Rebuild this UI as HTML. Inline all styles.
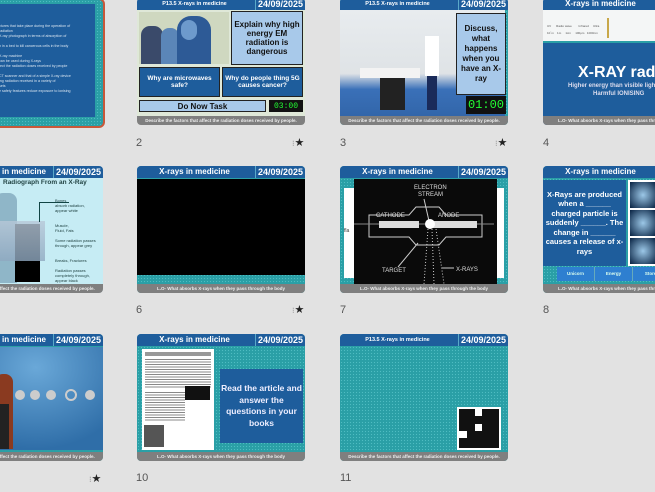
<!DOCTYPE html>
<html><head><meta charset="utf-8"><style>
*{margin:0;padding:0;box-sizing:border-box}
html,body{width:655px;height:492px;overflow:hidden}
body{background:#e2e2e2;font-family:"Liberation Sans",sans-serif}
#w{position:relative;width:655px;height:492px;overflow:hidden}
.s{position:absolute;width:168px;height:127px;border-radius:4px;overflow:hidden;background:#2a9fa6;background-image:radial-gradient(#4fbcc2 0.6px,transparent 0.8px);background-size:3px 3px}
.h{position:absolute;left:0;top:0;width:100%;height:12px;background:#1e5d9c;color:#fff;font-weight:bold;font-size:8px;line-height:12px}
.h .t{position:absolute;left:0;width:115px;text-align:center}
.h .d{position:absolute;right:0;width:50px;text-align:center;border-left:1.5px solid #5aa9c9;font-size:9px}
.f{position:absolute;left:0;bottom:0;width:100%;height:9px;background:#7f7f7f;color:#eee;font-size:4.5px;line-height:9px;text-align:center;font-weight:bold;white-space:nowrap}
.n{position:absolute;font-size:11px;color:#555}
.st{position:absolute;font-size:11px;color:#222}
.b{position:absolute;display:flex;align-items:center;justify-content:center;text-align:center;font-weight:bold}
</style></head><body><div id="w">

<!-- slide 1 -->
<div class="s" style="left:-65px;top:-2px;width:170px;height:130px;border:2.5px solid #c8583a;border-radius:6px">
 <div style="position:absolute;left:0;top:4px;width:158px;height:113px;background:#1e5d9c;color:#d8e4f0;font-size:3.6px;line-height:5px;padding:20px 0 0 62px">
 ctures that take place during the operation of<br>radiation<br>X-ray photograph in terms of absorption of<br><br>n in a bed to kill cancerous cells in the body<br><br>X-ray machine<br>can be used during X-rays<br>fect the radiation doses received by people<br><br>CT scanner and that of a simple X-ray device<br>ing radiation received in a variety of<br>sets<br>e safety features reduce exposure to ionising</div>
</div>

<!-- slide 2 -->
<div class="s" style="left:137px;top:-2px;background:#dfe8d8">
 <div class="h"><span class="t" style="font-size:5.5px">P13.5 X-rays in medicine</span><span class="d">24/09/2025</span></div>
 <div style="position:absolute;left:2px;top:14px;width:90px;height:52px;background:#cfd8c0"></div>
 <div style="position:absolute;left:4px;top:28px;width:22px;height:38px;background:#3a4a6a;border-radius:9px 9px 0 0"></div>
 <div style="position:absolute;left:24px;top:30px;width:18px;height:36px;background:#5b86b8;border-radius:8px 8px 0 0"></div>
 <div style="position:absolute;left:40px;top:18px;width:34px;height:48px;background:#2d5a96;border-radius:14px 14px 0 0"></div>
 <div style="position:absolute;left:44px;top:22px;width:16px;height:20px;background:#6d9acc;border-radius:8px"></div>
 <div class="b" style="left:94px;top:13px;width:72px;height:54px;background:#a8c9ea;border:1px solid #222;font-size:8px;color:#111">Explain why high energy EM radiation is dangerous</div>
 <div class="b" style="left:2px;top:69px;width:81px;height:30px;background:#1e5d9c;border:1px solid #222;font-size:6.5px;color:#fff">Why are microwaves safe?</div>
 <div class="b" style="left:85px;top:69px;width:81px;height:30px;background:#1e5d9c;border:1px solid #222;font-size:6.5px;color:#fff">Why do people thing 5G causes cancer?</div>
 <div class="b" style="left:2px;top:102px;width:127px;height:12px;background:#a8c9ea;border:1px solid #222;font-size:8px;color:#111">Do Now Task</div>
 <div class="b" style="left:132px;top:102px;width:34px;height:12px;background:#111;font-size:8px;color:#2f3;font-weight:normal;font-family:'Liberation Mono',monospace">03:00</div>
 <div class="f">Describe the factors that affect the radiation doses received by people.</div>
</div>

<!-- slide 3 -->
<div class="s" style="left:340px;top:-2px">
 <div class="h"><span class="t" style="font-size:5.5px">P13.5 X-rays in medicine</span><span class="d">24/09/2025</span></div>
 <div style="position:absolute;left:0;top:12px;width:165px;height:106px;background:linear-gradient(180deg,#e8ecef 0%,#dfe3e6 60%,#3a70b8 75%,#3266aa 100%)"></div>
 <div style="position:absolute;left:20px;top:70px;width:60px;height:10px;background:#f3f3f3"></div>
 <div style="position:absolute;left:40px;top:80px;width:25px;height:32px;background:#222"></div>
 <div style="position:absolute;left:85px;top:38px;width:14px;height:40px;background:#fff"></div>
 <div style="position:absolute;left:87px;top:78px;width:10px;height:34px;background:#1a2b5a"></div>
 <div class="b" style="left:116px;top:15px;width:50px;height:82px;background:#a8c9ea;border:1px solid #222;font-size:8px;color:#111;line-height:10px">Discuss, what happens when you have an X-ray</div>
 <div class="b" style="left:126px;top:98px;width:40px;height:18px;background:#111;font-size:12px;color:#2f3;font-weight:normal;font-family:'Liberation Mono',monospace">01:00</div>
 <div class="f">Describe the factors that affect the radiation doses received by people.</div>
</div>

<!-- slide 4 -->
<div class="s" style="left:543px;top:-2px;background:#1e5d9c">
 <div class="h"><span class="t">X-rays in medicine</span><span class="d">24/09/2025</span></div>
 <div style="position:absolute;left:0;top:12px;width:100%;height:33px;background:#f4f6f6;border-bottom:2px solid #2a9fa6;font-size:3px;color:#555;padding:14px 0 0 4px;line-height:5px">UV &nbsp;&nbsp;&nbsp;&nbsp; Radio wave &nbsp;&nbsp;&nbsp;&nbsp;&nbsp;&nbsp; Infrared &nbsp;&nbsp;&nbsp; Ultra<br>10<sup>-</sup>m &nbsp;&nbsp; 1m &nbsp;&nbsp;&nbsp; 1cm &nbsp;&nbsp;&nbsp; 100μm &nbsp; 1000nm</div>
 <div style="position:absolute;left:64px;top:20px;width:2px;height:20px;background:#c8a84a"></div>
 <div style="position:absolute;left:35px;top:66px;font-size:16px;font-weight:bold;color:#fff;white-space:nowrap">X-RAY radiation</div>
 <div style="position:absolute;left:25px;top:84px;font-size:6px;font-weight:bold;color:#dde;white-space:nowrap;line-height:8px">Higher energy than visible light<br>&nbsp;&nbsp;&nbsp;&nbsp;&nbsp;&nbsp;&nbsp;&nbsp;&nbsp;&nbsp;&nbsp;&nbsp;&nbsp;&nbsp;&nbsp;Harmful IONISING</div>
 <div class="f" style="text-align:left;padding-left:15px">L.O- What absorbs X-rays when they pass through the body</div>
</div>

<!-- slide 5 -->
<div class="s" style="left:-65px;top:166px;background:#c6ecf4">
 <div class="h"><span class="t" style="text-align:right;padding-right:4px">X-rays in medicine</span><span class="d">24/09/2025</span></div>
 <div style="position:absolute;left:68px;top:13px;font-size:6.5px;font-weight:bold;color:#244;white-space:nowrap">Radiograph From an X-Ray</div>
 <div style="position:absolute;left:60px;top:27px;width:22px;height:90px;background:#8fb6c8;border-radius:8px 8px 0 0"></div>
 <div style="position:absolute;left:80px;top:58px;width:25px;height:58px;background:#000"></div>
 <div style="position:absolute;left:60px;top:55px;width:50px;height:40px;background:linear-gradient(#b8c8d8,#8fa8c0);opacity:.8"></div>
 <div style="position:absolute;left:104px;top:36px;width:30px;height:1px;background:#144"></div>
 <div style="position:absolute;left:104px;top:36px;width:1px;height:20px;background:#144"></div>
 <div style="position:absolute;left:120px;top:32px;font-size:4px;color:#244;line-height:5px">Bones<br>absorb radiation,<br>appear white<br><br><br>Muscle,<br>Fluid, Fats<br><br>Some radiation passes<br>through, appear grey<br><br><br>Breaks, Fractures<br><br>Radiation passes<br>completely through,<br>appear black</div>
 <div class="f">Describe the factors that affect the radiation doses received by people.</div>
</div>

<!-- slide 6 -->
<div class="s" style="left:137px;top:166px">
 <div class="h"><span class="t">X-rays in medicine</span><span class="d">24/09/2025</span></div>
 <div style="position:absolute;left:0;top:13px;width:100%;height:96px;background:#000"></div>
 <div class="f">L.O- What absorbs X-rays when they pass through the body</div>
</div>

<!-- slide 7 -->
<div class="s" style="left:340px;top:166px">
 <div class="h"><span class="t">X-rays in medicine</span><span class="d">24/09/2025</span></div>
 <div style="position:absolute;left:4px;top:22px;width:160px;height:90px;background:#fff"></div>
 <div style="position:absolute;left:14px;top:13px;width:143px;height:105px;background:#0a0a0a"></div>
 <svg style="position:absolute;left:14px;top:13px" width="143" height="105" viewBox="0 0 143 105"><g fill="none" stroke="#ccc" stroke-width="1"><path d="M15 36 H55 L62 28 H85 L92 36 H128 V58 H92 L85 66 H62 L55 58 H15 Z"/><path d="M0 45 H140" stroke="#888"/><path d="M70 20 L75 42 M64 64 L44 88"/><path d="M74 50 L70 105 M78 50 L80 105 M82 50 L90 105" stroke-dasharray="1 2"/><path d="M88 89 H100"/></g><rect x="25" y="42" width="40" height="7" fill="#ddd"/><rect x="78" y="42" width="45" height="7" fill="#ddd"/><circle cx="76" cy="45" r="5" fill="#fff"/><g fill="#ddd" font-size="6" font-family="Liberation Sans"><text x="60" y="10">ELECTRON</text><text x="64" y="17">STREAM</text><text x="22" y="38">CATHODE</text><text x="84" y="38">ANODE</text><text x="28" y="93">TARGET</text><text x="102" y="92">X-RAYS</text></g></svg>
 <div style="position:absolute;left:4px;top:62px;font-size:5px;color:#333">fla</div>
 <div class="f">L.O- What absorbs X-rays when they pass through the body</div>
</div>

<!-- slide 8 -->
<div class="s" style="left:543px;top:166px">
 <div class="h"><span class="t">X-rays in medicine</span><span class="d">24/09/2025</span></div>
 <div class="b" style="left:0;top:14px;width:83px;height:86px;background:#1e5d9c;color:#fff;font-size:7.5px;line-height:9.5px">X-Rays are produced when a ______ charged particle is suddenly ______. The change in ______ causes a release of x-rays</div>
 <div style="position:absolute;left:85px;top:14px;width:30px;height:86px;background:#fff;padding:2px"><div style="height:26px;background:radial-gradient(#9cc8e8,#062040);margin-bottom:2px"></div><div style="height:26px;background:radial-gradient(#9cc8e8,#062040);margin-bottom:2px"></div><div style="height:26px;background:radial-gradient(#9cc8e8,#062040)"></div></div>
 <div style="position:absolute;left:14px;top:101px;width:154px;height:14px;background:#2e7fd0;color:#dfe;font-size:4.5px;font-weight:bold;line-height:14px;display:flex"><span style="width:38px;text-align:center;border-right:1px solid #6ab">Unicorn</span><span style="width:38px;text-align:center;border-right:1px solid #6ab">Energy</span><span style="width:38px;text-align:center">Stored</span></div>
 <div class="f" style="text-align:left;padding-left:15px">L.O- What absorbs X-rays when they pass through the body</div>
</div>

<!-- slide 9 -->
<div class="s" style="left:-65px;top:334px">
 <div class="h"><span class="t" style="text-align:right;padding-right:4px">X-rays in medicine</span><span class="d">24/09/2025</span></div>
 <div style="position:absolute;left:0;top:13px;width:100%;height:103px;background:radial-gradient(ellipse at 60% 20%,#6aa8d8,#2f6ea8 70%)"></div>
 <div style="position:absolute;left:60px;top:40px;width:18px;height:75px;background:#8a3a20;border-radius:8px 8px 0 0"></div>
 <div style="position:absolute;left:60px;top:70px;width:14px;height:45px;background:#222"></div>
 <div style="position:absolute;left:80px;top:56px;width:10px;height:10px;border-radius:50%;background:#ccc"></div>
 <div style="position:absolute;left:95px;top:56px;width:10px;height:10px;border-radius:50%;background:#ccc"></div>
 <div style="position:absolute;left:111px;top:56px;width:10px;height:10px;border-radius:50%;background:#ccc"></div>
 <div style="position:absolute;left:130px;top:55px;width:12px;height:12px;border-radius:50%;border:2.5px solid #ccc"></div>
 <div style="position:absolute;left:150px;top:56px;width:10px;height:10px;border-radius:50%;background:#ccc"></div>
 <div class="f">Describe the factors that affect the radiation doses received by people.</div>
</div>

<!-- slide 10 -->
<div class="s" style="left:137px;top:334px">
 <div class="h"><span class="t">X-rays in medicine</span><span class="d">24/09/2025</span></div>
 <div style="position:absolute;left:5px;top:15px;width:72px;height:101px;background:#fff;padding:3px"><div style="height:4px;background:#999;margin-bottom:3px"></div><div style="height:30px;background:repeating-linear-gradient(#888 0 1px,#fff 1px 2.5px)"></div><div style="position:absolute;right:4px;top:37px;width:25px;height:14px;background:#111"></div><div style="height:30px;margin-top:3px;width:40px;background:repeating-linear-gradient(#888 0 1px,#fff 1px 2.5px)"></div><div style="position:absolute;left:2px;top:76px;width:20px;height:22px;background:#555"></div></div>
 <div class="b" style="left:83px;top:35px;width:83px;height:74px;background:#1e5d9c;color:#eef;font-size:8.5px;line-height:11.5px">Read the article and answer the questions in your books</div>
 <div class="f">L.O- What absorbs X-rays when they pass through the body</div>
</div>

<!-- slide 11 -->
<div class="s" style="left:340px;top:334px">
 <div class="h"><span class="t" style="font-size:5.5px">P13.5 X-rays in medicine</span><span class="d">24/09/2025</span></div>
 <div style="position:absolute;left:117px;top:73px;width:44px;height:43px;background:#fff;padding:2px"><div style="position:relative;width:100%;height:100%;background:#111"><div style="position:absolute;left:16px;top:0;width:7px;height:7px;background:#fff"></div><div style="position:absolute;left:16px;top:15px;width:7px;height:7px;background:#fff"></div><div style="position:absolute;left:0;top:22px;width:8px;height:7px;background:#fff"></div></div></div>
 <div class="f">Describe the factors that affect the radiation doses received by people.</div>
</div>

<div class="n" style="left:136px;top:137px">2</div><div class="st" style="left:292px;top:136px"><span style="font-size:8px;color:#888">⁝</span>★</div>
<div class="n" style="left:340px;top:137px">3</div><div class="st" style="left:495px;top:136px"><span style="font-size:8px;color:#888">⁝</span>★</div>
<div class="n" style="left:543px;top:137px">4</div>
<div class="n" style="left:136px;top:304px">6</div><div class="st" style="left:292px;top:303px"><span style="font-size:8px;color:#888">⁝</span>★</div>
<div class="n" style="left:340px;top:304px">7</div>
<div class="n" style="left:543px;top:304px">8</div>
<div class="st" style="left:89px;top:472px"><span style="font-size:8px;color:#888">⁝</span>★</div>
<div class="n" style="left:136px;top:472px">10</div>
<div class="n" style="left:340px;top:472px">11</div>
</div></body></html>
